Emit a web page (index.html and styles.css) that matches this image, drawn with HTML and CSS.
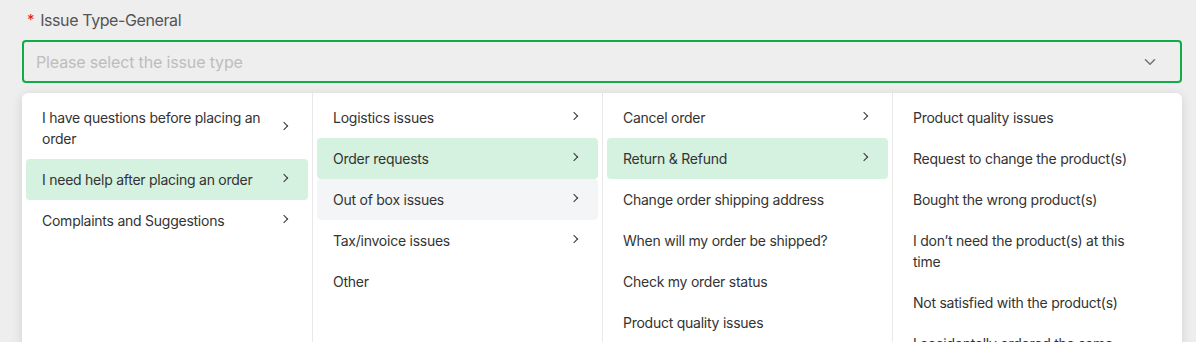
FILE: index.html
```html
<!doctype html>
<html>

<head>
	<meta charset="UTF-8">
	<title>Issue Type</title>
	<link rel="stylesheet" href="styles.css">
</head>

<body>
	<div class="field">
		<div class="field_label"><span class="req">*</span>Issue Type-General</div>
		<div class="select">
			<span class="placeholder">Please select the issue type</span>
			<svg class="arrow" width="12" height="8" viewBox="0 0 12 8"><path d="M1.5 1.8L6 6.2L10.5 1.8" fill="none" stroke="#777" stroke-width="1.6" stroke-linecap="round" stroke-linejoin="round"/></svg>
		</div>
		<div class="cascader">
			<ul class="col">
				<li class="has_sub">I have questions before placing an order</li>
				<li class="has_sub active">I need help after placing an order</li>
				<li class="has_sub">Complaints and Suggestions</li>
			</ul>
			<ul class="col">
				<li class="has_sub">Logistics issues</li>
				<li class="has_sub active">Order requests</li>
				<li class="has_sub hover">Out of box issues</li>
				<li class="has_sub">Tax/invoice issues</li>
				<li>Other</li>
			</ul>
			<ul class="col">
				<li class="has_sub">Cancel order</li>
				<li class="has_sub active">Return &amp; Refund</li>
				<li>Change order shipping address</li>
				<li>When will my order be shipped?</li>
				<li>Check my order status</li>
				<li>Product quality issues</li>
			</ul>
			<ul class="col">
				<li>Product quality issues</li>
				<li>Request to change the product(s)</li>
				<li>Bought the wrong product(s)</li>
				<li>I don’t need the product(s) at this time</li>
				<li>Not satisfied with the product(s)</li>
				<li>I accidentally ordered the same product twice</li>
			</ul>
		</div>
	</div>
</body>

</html>
```
FILE: styles.css
```css
html,
body {
	margin: 0;
	height: 100%;
	overflow: hidden;
}

body {
	background: #eeeeee;
	font-family: Inter, "Noto Sans", sans-serif;
	color: #333;
}

.field {
	padding: 0 14px 0 22px;
}

.field_label {
	height: 40px;
	line-height: 40px;
	font-size: 16px;
	color: #555;
	padding-left: 5px;
	letter-spacing: -0.4px;
}

.req {
	color: #e01b1b;
	margin-right: 6px;
	font-size: 15px;
	position: relative;
	top: -1px;
}

.select {
	height: 43px;
	box-sizing: border-box;
	border: 2px solid #10ad45;
	border-radius: 4px;
	display: flex;
	align-items: center;
	justify-content: space-between;
	padding: 0 24px 0 12px;
}

.placeholder {
	font-size: 16px;
	color: #bdbdbd;
	letter-spacing: -0.15px;
}

.arrow {
	display: block;
}

.cascader {
	margin-top: 10px;
	background: #fff;
	border-radius: 6px;
	box-shadow: 0 2px 12px rgba(0, 0, 0, 0.12);
	display: grid;
	grid-template-columns: repeat(4, 1fr);
	height: 300px;
}

.col {
	list-style: none;
	margin: 0;
	padding: 4px;
}

.col+.col {
	border-left: 1px solid #e8e8e8;
}

.col li {
	position: relative;
	padding: 10px 40px 10px 16px;
	font-size: 14px;
	line-height: 21px;
	letter-spacing: -0.25px;
	border-radius: 4px;
}

.col li.active {
	background: #d5f1e0;
}

.col li.hover {
	background: #f4f5f7;
}

.has_sub::after {
	content: "";
	position: absolute;
	right: 21px;
	top: 50%;
	width: 5px;
	height: 5px;
	margin-top: -5px;
	border-top: 1.5px solid #333;
	border-right: 1.5px solid #333;
	transform: rotate(45deg);
}
```
